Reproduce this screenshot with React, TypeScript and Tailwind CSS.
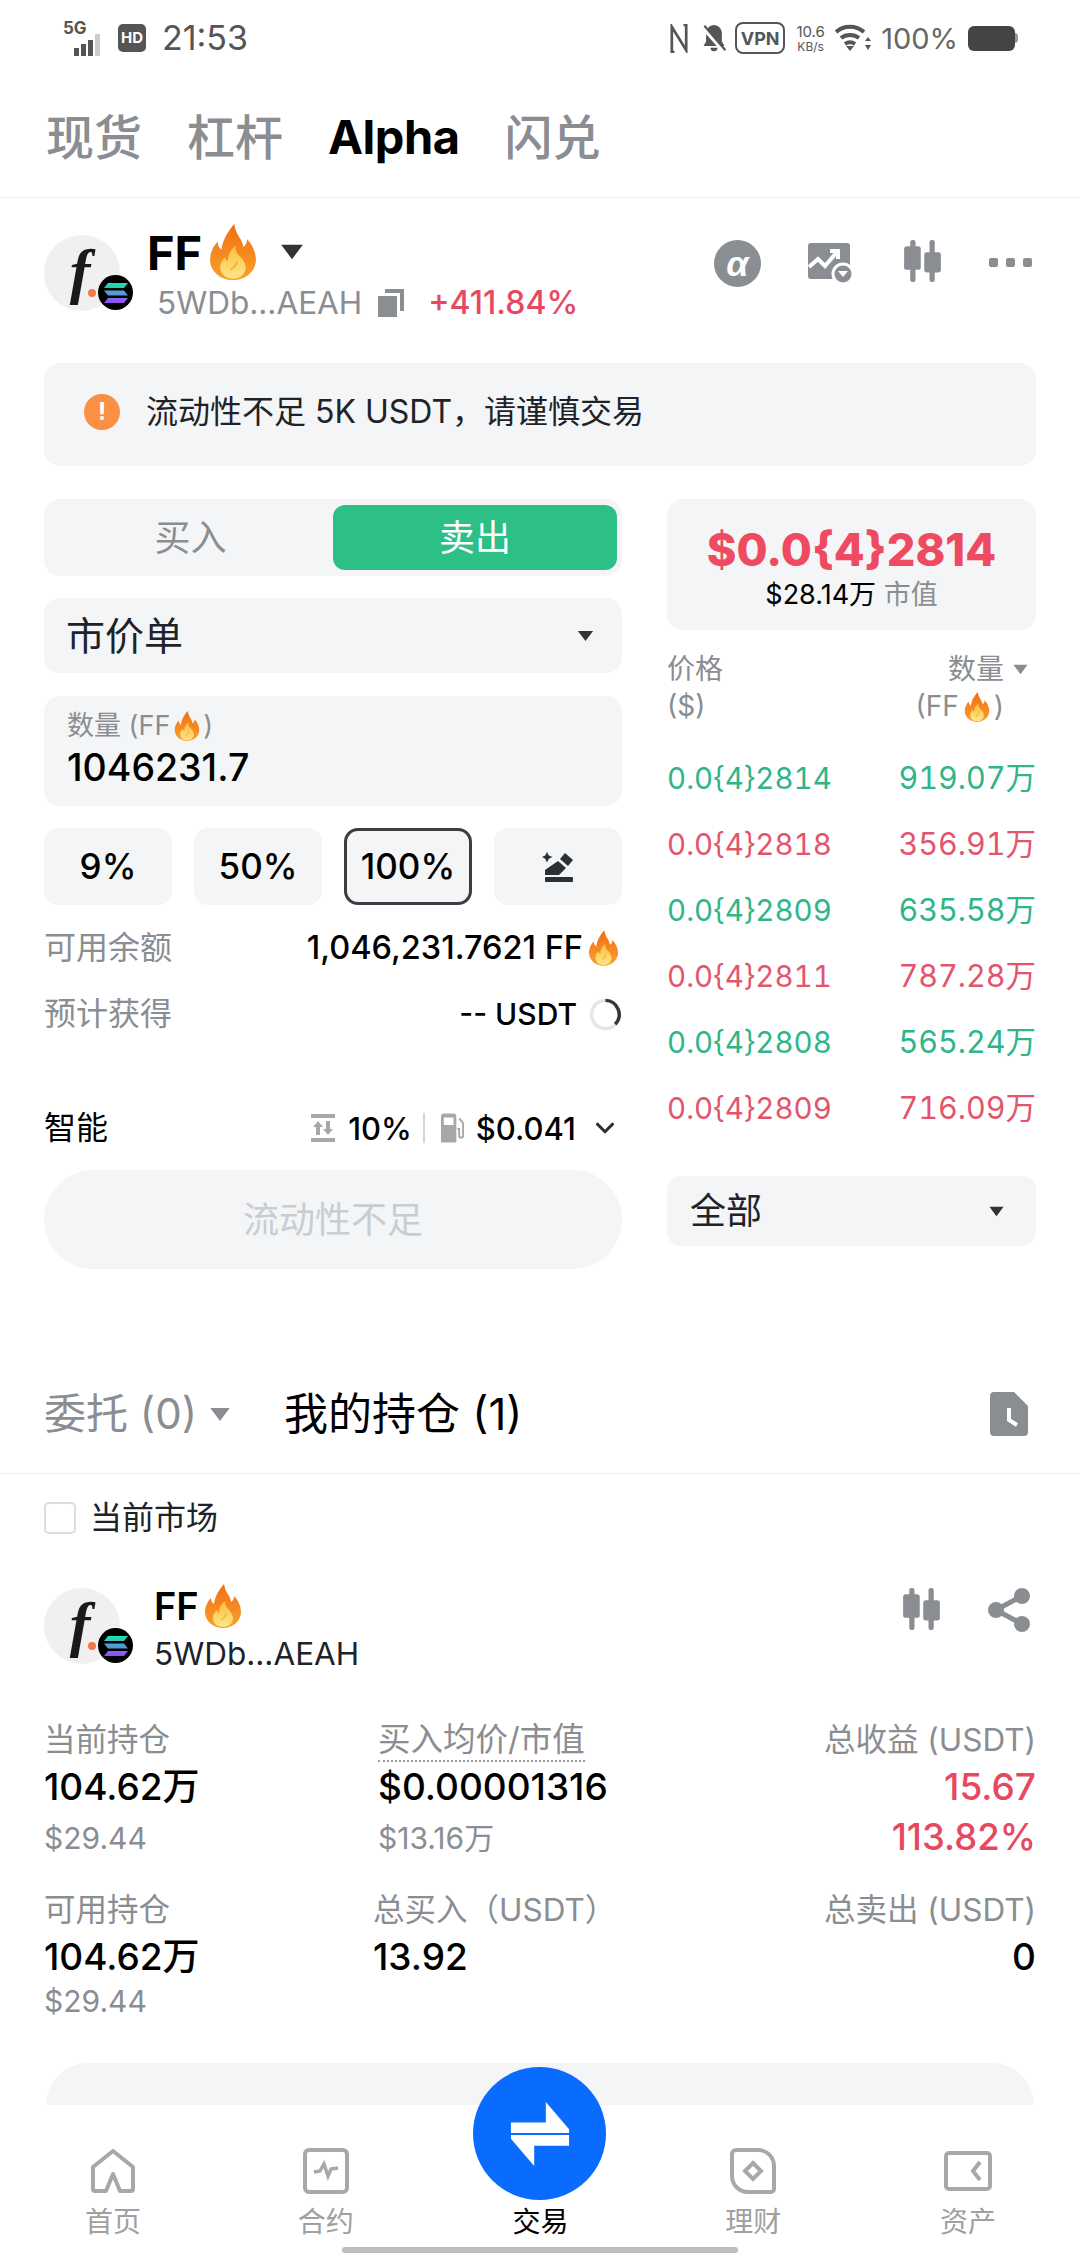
import { ChevronDown } from "lucide-react";

const font = { fontFamily: '"Inter", "Noto Sans CJK SC", sans-serif' };

function Flame({ className }: { className: string }) {
  return (
    <svg viewBox="0 0 36 44" className={className}>
      <defs>
        <linearGradient id="flameOuter" x1="0" y1="0" x2="0" y2="1">
          <stop offset="0" stopColor="#f26d12" />
          <stop offset="1" stopColor="#f9a12e" />
        </linearGradient>
        <linearGradient id="flameInner" x1="0" y1="0" x2="0" y2="1">
          <stop offset="0" stopColor="#fbbf3c" />
          <stop offset="1" stopColor="#fde68a" />
        </linearGradient>
      </defs>
      <path
        d="M19 0c1 6 3 9 5 12 1 2 2 4 2 6 2-1 3-3 3-6 4 4 7 10 7 16 0 9-8 16-18 16S0 37 0 28c0-6 3-11 6-14 0 3 1 5 3 6 1-8 5-14 10-20z"
        fill="url(#flameOuter)"
      />
      <path
        d="M20 17c0 4 1 6 3 8 3 3 5 6 5 9 0 5-4 9-10 9S8 39 8 34c0-4 2-6 4-8 0 2 1 3 2 3 0-5 2-9 6-12z"
        fill="url(#flameInner)"
      />
      <path d="M21 29c0 3-2 5-5 7" fill="none" stroke="#f2b63a" strokeWidth="1.500" />
    </svg>
  );
}

function Caret({ className }: { className: string }) {
  return (
    <svg viewBox="0 0 20 14" className={className} fill="currentColor">
      <path d="M1 1h18l-9 12z" />
    </svg>
  );
}

function Candles({ className }: { className: string }) {
  return (
    <svg viewBox="0 0 42 48" className={className} fill="#8a8d91">
      <rect x="7" y="0" width="6" height="48" rx="2.500" />
      <rect x="0" y="7" width="19" height="27" rx="3" />
      <rect x="29" y="0" width="6" height="48" rx="2.500" />
      <rect x="23" y="14" width="19" height="23" rx="3" />
    </svg>
  );
}

function TokenLogo() {
  return (
    <div className="relative w-[76px] h-[76px] shrink-0">
      <div className="w-[76px] h-[76px] rounded-full bg-[#f0f0f0] flex items-center justify-center">
        <span
          className="text-[62px] leading-none italic font-bold text-[#1a1a1a] -mt-1 -ml-1"
          style={{ fontFamily: '"Liberation Serif", serif' }}
        >
          f
        </span>
      </div>
      <div className="absolute left-[44px] top-[54px] w-[8px] h-[8px] rounded-full bg-[#f4794a]" />
      <div className="absolute left-[54px] top-[40px] w-[35px] h-[35px] rounded-full bg-black flex items-center justify-center">
        <svg viewBox="0 0 24 20" className="w-[24px] h-[20px]">
          <defs>
            <linearGradient id="sol" x1="0" y1="0" x2="0" y2="1">
              <stop offset="0" stopColor="#19e3a8" />
              <stop offset="0.5" stopColor="#4f9fd8" />
              <stop offset="1" stopColor="#9945ff" />
            </linearGradient>
          </defs>
          <path d="M4 0h20l-4 5H0zM0 7.500h20l4 5H4zM4 15h20l-4 5H0z" fill="url(#sol)" />
        </svg>
      </div>
    </div>
  );
}

function StatusBar() {
  return (
    <div className="h-[76px] relative flex items-center justify-between pl-[63px] pr-[62px] text-[#555]">
      <div className="flex items-center">
        <div className="relative w-[45px] h-[36px]">
          <span className="absolute left-0 -top-[1px] text-[17px] leading-[18px] font-bold">5G</span>
          <div className="absolute left-[11px] bottom-0 flex items-end gap-[2px]">
            <div className="w-[5px] h-[8px] bg-[#555]" />
            <div className="w-[5px] h-[12px] bg-[#555]" />
            <div className="w-[5px] h-[16px] bg-[#555]" />
            <div className="w-[5px] h-[22px] bg-[#ccc]" />
          </div>
        </div>
        <div className="ml-[10px] w-[28px] h-[28px] rounded-[5px] bg-[#555] text-white text-[15px] font-bold flex items-center justify-center">
          HD
        </div>
        <span className="ml-[16px] text-[34px] leading-none">21:53</span>
      </div>
      <div className="flex items-center">
        <svg viewBox="0 0 20 32" className="w-[18px] h-[29px]" fill="none" stroke="#555" strokeWidth="3">
          <path d="M5 31h-3V3l16 26V1h-3" />
        </svg>
        <svg viewBox="0 0 28 32" className="ml-[13px] w-[26px] h-[28px]" fill="#555">
          <path d="M14 1c-5 0-9 4-9 10v9l-3 5h24l-3-5v-9c0-6-4-10-9-10zM10 27h8a4 4 0 0 1-8 0z" />
          <path d="M1 4l24 27" stroke="#fff" strokeWidth="4" />
          <path d="M3 2l24 28" stroke="#555" strokeWidth="2.500" />
        </svg>
        <div className="ml-[8px] w-[50px] h-[32px] rounded-[8px] border-2 border-[#555] text-[18px] font-bold flex items-center justify-center">
          VPN
        </div>
        <div className="ml-[9px] w-[33px] text-center text-[15px] leading-[16px]">
          <div>10.6</div>
          <div className="text-[12px] leading-[13px]">KB/s</div>
        </div>
        <svg viewBox="0 0 36 28" className="ml-[8px] w-[36px] h-[28px]" fill="none" stroke="#555" strokeWidth="4">
          <path d="M1 8c8-7 20-7 28 0M6 14c5-4 13-4 18 0M10 20c3-2 7-2 10 0" />
          <path d="M15 27l4-5h-8z" fill="#555" stroke="none" />
          <path d="M33 13l3 4h-6zM33 26l3-5h-6z" fill="#555" stroke="none" />
        </svg>
        <span className="ml-[10px] text-[29px] leading-none text-[#666]">100%</span>
        <div className="ml-[10px] w-[47px] h-[25px] rounded-[6px] bg-[#444]" />
        <div className="w-[3px] h-[10px] bg-[#999] rounded-r" />
      </div>
    </div>
  );
}

function TopTabs() {
  return (
    <div className="h-[122px] flex items-center pl-[46px] border-b border-[#efefef] text-[48px] font-medium text-[#8a8d91] pt-[2px]">
      <span>现货</span>
      <span className="ml-[45px]">杠杆</span>
      <span className="ml-[45px] font-bold text-black text-[47px] tracking-[-0.5px]">Alpha</span>
      <span className="ml-[45px]">闪兑</span>
    </div>
  );
}

function TokenHeader() {
  return (
    <div className="h-[165px] flex px-[44px] pt-[37px] justify-between">
      <div className="flex">
        <TokenLogo />
        <div className="ml-[27px]">
          <div className="flex items-center h-[50px] -mt-[8px]">
            <span className="text-[47px] leading-none font-bold text-black">FF</span>
            <Flame className="ml-[7px] w-[48px] h-[56px]" />
            <Caret className="ml-[23px] w-[24px] h-[18px] text-[#333]" />
          </div>
          <div className="flex items-center mt-[6px] ml-[10px]">
            <span className="text-[31.500px] leading-[40px] text-[#8a8d91]">5WDb...AEAH</span>
            <svg viewBox="0 0 26 28" className="ml-[16px] w-[26px] h-[28px]" fill="#8a8d91">
              <path d="M0 7h19v21H0z" />
              <path d="M7 0h19v22h-4V4H7z" />
            </svg>
            <span className="ml-[24px] text-[32px] leading-[40px] font-medium text-[#e8485f]">+411.84%</span>
          </div>
        </div>
      </div>
      <div className="flex items-start pt-[5px] pr-[4px]">
        <div
          className="w-[47px] h-[47px] rounded-full bg-[#8a8d91] text-white text-[36px] italic font-bold flex items-center justify-center"
          style={{ fontFamily: '"Liberation Sans", sans-serif' }}
        >
          α
        </div>
        <svg viewBox="0 0 46 42" className="ml-[47px] mt-[3px] w-[46px] h-[42px]">
          <rect x="0" y="0" width="42" height="36" rx="3" fill="#8a8d91" />
          <path d="M1 24l9-8 7 7 12-14M22 8h8v8" fill="none" stroke="#fff" strokeWidth="4" />
          <circle cx="35" cy="31" r="10" fill="#8a8d91" stroke="#fff" strokeWidth="3" />
          <path d="M30 28h10l-5 6z" fill="#fff" />
        </svg>
        <Candles className="ml-[47px] w-[43px] h-[42px]" />
        <div className="ml-[45px] mt-[18px] flex gap-[8px]">
          <div className="w-[9px] h-[9px] rounded-[2px] bg-[#8a8d91]" />
          <div className="w-[9px] h-[9px] rounded-[2px] bg-[#8a8d91]" />
          <div className="w-[9px] h-[9px] rounded-[2px] bg-[#8a8d91]" />
        </div>
      </div>
    </div>
  );
}

function Alert() {
  return (
    <div className="mx-[44px] h-[103px] rounded-[16px] bg-[#f4f5f6] flex items-center pl-[40px] pb-[6px]">
      <div className="w-[36px] h-[36px] rounded-full bg-[#fb8f43] text-white text-[24px] font-bold flex items-center justify-center">
        !
      </div>
      <span className="ml-[26px] text-[32px] leading-none text-[#1e2329]">流动性不足 5K USDT，请谨慎交易</span>
    </div>
  );
}

function PctButton({ label, active }: { label: string; active?: boolean }) {
  return (
    <div
      className={
        active
          ? "h-[77px] rounded-[14px] bg-[#f4f5f6] border-[3px] border-[#3a3d41] flex items-center justify-center text-[35px] font-medium text-black"
          : "h-[77px] rounded-[14px] bg-[#f4f5f6] flex items-center justify-center text-[35px] font-medium text-black"
      }
    >
      {label}
    </div>
  );
}

function OrderForm() {
  return (
    <div className="w-[578px] shrink-0">
      <div className="h-[77px] rounded-[16px] bg-[#f4f5f6] pl-[6px] pr-[5px] py-[6px] flex">
        <div className="flex-1 flex items-center justify-center text-[36px] text-[#8a8d91] -ml-[2px]">买入</div>
        <div className="w-[284px] rounded-[12px] bg-[#2dc086] flex items-center justify-center text-[36px] text-white">
          卖出
        </div>
      </div>
      <div className="mt-[22px] h-[75px] rounded-[16px] bg-[#f4f5f6] flex items-center justify-between pl-[22px] pr-[28px]">
        <span className="text-[39px] leading-none text-[#1e2329]">市价单</span>
        <Caret className="w-[17px] h-[12px] text-[#333]" />
      </div>
      <div className="mt-[23px] h-[110px] rounded-[16px] bg-[#f4f5f6] pl-[23px] pt-[12px]">
        <div className="flex items-center h-[36px] text-[27px] text-[#8a8d91]">
          <span>数量 (FF</span>
          <Flame className="ml-[4px] w-[26px] h-[30px]" />
          <span className="ml-[3px]">)</span>
        </div>
        <div className="mt-[2px] text-[37.500px] leading-[44px] font-medium text-black">1046231.7</div>
      </div>
      <div className="mt-[22px] grid grid-cols-4 gap-[22px]">
        <PctButton label="9%" />
        <PctButton label="50%" />
        <PctButton label="100%" active />
        <div className="h-[77px] rounded-[14px] bg-[#f4f5f6] flex items-center justify-center">
          <svg viewBox="0 0 32 30" className="w-[32px] h-[30px]" fill="#2b2f36">
            <path d="M5 0l1.800 3.500L10.500 5 6.800 6.800 5 10.500 3.200 6.800 0 5l3.200-1.500z" />
            <path d="M23 1l8 7-5 6-8-7z" />
            <path d="M16 9l8 7-7 7H3v-5z" />
            <rect x="3" y="25" width="28" height="5" rx="1" />
          </svg>
        </div>
      </div>
      <div className="mt-[23px] flex items-center justify-between h-[40px]">
        <span className="text-[32px] leading-none text-[#8a8d91]">可用余额</span>
        <div className="flex items-center pr-[4px]">
          <span className="text-[32.500px] leading-none font-medium text-black">1,046,231.7621 FF</span>
          <Flame className="ml-[6px] w-[29px] h-[36px]" />
        </div>
      </div>
      <div className="mt-[26px] flex items-center justify-between h-[40px]">
        <span className="text-[32px] leading-none text-[#8a8d91]">预计获得</span>
        <div className="flex items-center">
          <span className="text-[30px] leading-none font-medium text-black">-- USDT</span>
          <svg viewBox="0 0 34 34" className="ml-[12px] w-[33px] h-[33px]" fill="none" strokeWidth="3.500">
            <circle cx="17" cy="17" r="14.500" stroke="#e6e6e6" />
            <path d="M17 2.500A14.500 14.500 0 0 1 27 27" stroke="#33363a" />
          </svg>
        </div>
      </div>
      <div className="mt-[74px] flex items-center justify-between h-[40px]">
        <span className="text-[32px] leading-none text-black">智能</span>
        <div className="flex items-center pr-[2px]">
          <svg viewBox="0 0 24 28" className="w-[24px] h-[28px]" fill="#a8a8a8">
            <rect x="0" y="0" width="24" height="4" />
            <rect x="0" y="24" width="24" height="4" />
            <path d="M7 7l5 6H9v8H5v-8H2zM17 21l-5-6h3V7h4v8h3z" />
          </svg>
          <span className="ml-[13px] text-[31px] leading-none font-medium text-black">10%</span>
          <div className="ml-[11px] w-[2px] h-[30px] bg-[#d6d6d6]" />
          <svg viewBox="0 0 26 30" className="ml-[15px] w-[25px] h-[30px]" fill="#a8a8a8">
            <path d="M1 3a3 3 0 0 1 3-3h10a3 3 0 0 1 3 3v27H1zM4 4v8h10V4z" />
            <path d="M20 5l4 5v13a2 2 0 0 1-4 0v-7h-2" fill="none" stroke="#a8a8a8" strokeWidth="2" />
          </svg>
          <span className="ml-[11px] text-[31px] leading-none font-medium text-black">$0.041</span>
          <ChevronDown className="ml-[14px] w-[30px] h-[30px] text-[#2b2f36]" strokeWidth={2.5} />
        </div>
      </div>
      <div className="mt-[22px] h-[99px] rounded-full bg-[#f3f5f6] flex items-center justify-center text-[36px] text-[#c9cdd1]">
        流动性不足
      </div>
    </div>
  );
}

const bookRows = [
  { price: "0.0{4}2814", qty: "919.07万", color: "text-[#2fb588]" },
  { price: "0.0{4}2818", qty: "356.91万", color: "text-[#e2556c]" },
  { price: "0.0{4}2809", qty: "635.58万", color: "text-[#2fb588]" },
  { price: "0.0{4}2811", qty: "787.28万", color: "text-[#e2556c]" },
  { price: "0.0{4}2808", qty: "565.24万", color: "text-[#2fb588]" },
  { price: "0.0{4}2809", qty: "716.09万", color: "text-[#e2556c]" },
];

function OrderBook() {
  return (
    <div className="flex-1">
      <div className="h-[131px] rounded-[16px] bg-[#f4f5f6] flex flex-col items-center pt-[26px]">
        <div className="text-[45px] leading-[50px] font-extrabold text-[#ee4b62]">$0.0{"{4}"}2814</div>
        <div className="mt-[4px] text-[27px] leading-[32px]">
          <span className="text-black">$28.14万 </span>
          <span className="text-[#8a8d91]">市值</span>
        </div>
      </div>
      <div className="mt-[20px] flex justify-between text-[28px] text-[#8a8d91]">
        <div className="leading-[37px]">
          <div className="mt-[1px]">价格</div>
          <div>($)</div>
        </div>
        <div className="leading-[37px] flex flex-col items-end pr-[7px]">
          <div className="flex items-center mt-[1px]">
            数量
            <Caret className="ml-[8px] w-[17px] h-[11px] text-[#8a8d91]" />
          </div>
          <div className="flex items-center pr-[25px]">
            (FF
            <Flame className="ml-[4px] w-[28px] h-[30px]" />
            <span className="ml-[3px]">)</span>
          </div>
        </div>
      </div>
      <div className="mt-[20px]">
        {bookRows.map((row, i) => (
          <div key={i} className={`h-[66px] flex items-center justify-between tabular-nums ${row.color}`}>
            <span className="text-[29.500px]">{row.price}</span>
            <span className="text-[30.500px]">{row.qty}</span>
          </div>
        ))}
      </div>
      <div className="mt-[35px] h-[70px] rounded-[14px] bg-[#f4f5f6] flex items-center justify-between pl-[23px] pr-[31px]">
        <span className="text-[36px] leading-none text-[#1e2329]">全部</span>
        <Caret className="w-[17px] h-[11px] text-[#333]" />
      </div>
    </div>
  );
}

function PositionTabs() {
  return (
    <div className="mt-[113px] h-[92px] flex items-start justify-between px-[44px] border-b border-[#efefef] pt-[10px]">
      <div className="flex items-center h-[44px]">
        <span className="text-[42px] leading-none text-[#8a8d91]">委托 (0)</span>
        <Caret className="ml-[12px] w-[22px] h-[15px] text-[#8a8d91]" />
        <span className="ml-[53px] text-[44px] leading-none text-black">我的持仓 (1)</span>
      </div>
      <svg viewBox="0 0 38 44" className="mr-[8px] w-[38px] h-[44px]">
        <path d="M4 0h20l14 14v26a4 4 0 0 1-4 4H4a4 4 0 0 1-4-4V4a4 4 0 0 1 4-4z" fill="#8a8d91" />
        <path d="M19 16v12l8 5" fill="none" stroke="#fff" strokeWidth="4" />
      </svg>
    </div>
  );
}

function Stat({
  label,
  value,
  sub,
  subClass,
  dotted,
  align,
}: {
  label: string;
  value: string;
  sub?: string;
  subClass?: string;
  dotted?: boolean;
  align?: "right";
}) {
  return (
    <div className={align === "right" ? "text-right" : ""}>
      <div className="h-[44px] leading-[44px] text-[31.500px] text-[#8a8d91]">
        <span className={dotted ? "border-b-2 border-dotted border-[#999] pb-[1px] text-[32.500px]" : ""}>{label}</span>
      </div>
      <div className={`mt-[1px] h-[48px] leading-[48px] text-[37px] font-medium ${align === "right" && label.startsWith("总收益") ? "text-[#e8485f]" : "text-black"}`}>
        {value}
      </div>
      {sub && <div className={subClass ?? "mt-[4px] h-[46px] leading-[46px] text-[30px] text-[#8a8d91]"}>{sub}</div>}
    </div>
  );
}

function Position() {
  return (
    <div className="px-[44px]">
      <div className="mt-[28px] flex items-center h-[32px]">
        <div className="w-[32px] h-[32px] rounded-[5px] border-2 border-[#dcdcdc]" />
        <span className="ml-[14px] text-[32px] leading-none text-[#1e2329]">当前市场</span>
      </div>
      <div className="mt-[54px] flex justify-between">
        <div className="flex">
          <TokenLogo />
          <div className="ml-[34px] -mt-[4px]">
            <div className="flex items-center h-[44px]">
              <span className="text-[38px] leading-none font-semibold text-black">FF</span>
              <Flame className="ml-[6px] w-[36px] h-[44px]" />
            </div>
            <div className="mt-[4px] text-[31.500px] leading-[44px] text-[#1e2329]">5WDb...AEAH</div>
          </div>
        </div>
        <div className="flex items-start mr-[6px]">
          <Candles className="w-[43px] h-[42px]" />
          <svg viewBox="0 0 42 44" className="ml-[45px] w-[42px] h-[44px]" fill="#8a8d91">
            <circle cx="34" cy="8" r="8" />
            <circle cx="8" cy="22" r="8" />
            <circle cx="34" cy="36" r="8" />
            <path d="M8 22L34 8M8 22l26 14" stroke="#8a8d91" strokeWidth="5" />
          </svg>
        </div>
      </div>
      <div className="mt-[42px] grid grid-cols-[334px_1fr_1fr]">
        <Stat label="当前持仓" value="104.62万" sub="$29.44" />
        <Stat label="买入均价/市值" value="$0.00001316" sub="$13.16万" dotted />
        <Stat
          label="总收益 (USDT)"
          value="15.67"
          sub="113.82%"
          subClass="mt-[3px] h-[46px] leading-[46px] text-[36.500px] font-medium text-[#e8485f]"
          align="right"
        />
      </div>
      <div className="mt-[27px] grid grid-cols-[329px_1fr_1fr]">
        <Stat
          label="可用持仓"
          value="104.62万"
          sub="$29.44"
          subClass="-mt-[3px] h-[46px] leading-[46px] text-[30px] text-[#8a8d91]"
        />
        <Stat label="总买入（USDT）" value="13.92" />
        <Stat label="总卖出 (USDT)" value="0" align="right" />
      </div>
    </div>
  );
}

function NavItem({ label, active, children }: { label: string; active?: boolean; children?: React.ReactNode }) {
  return (
    <div className="flex flex-col items-center w-[120px]">
      <div className="h-[48px] flex items-center justify-center">{children}</div>
      <span className={`mt-[9px] text-[28px] leading-[36px] ${active ? "text-black" : "text-[#a0a0a0]"}`}>{label}</span>
    </div>
  );
}

function BottomNav() {
  return (
    <div className="absolute left-0 right-0 bottom-0 h-[193px]">
      <div className="absolute left-[46px] right-[46px] top-0 h-[42px] rounded-t-[60px] bg-[#f3f5f6]" />
      <div className="absolute left-0 right-0 top-[42px] bottom-0 bg-white" />
      <div className="absolute left-[473px] top-[4px] w-[133px] h-[133px] rounded-full bg-[#0a6cff] flex items-center justify-center">
        <svg viewBox="0 0 64 66" className="w-[62px] h-[66px]" fill="#fff">
          <path d="M38 0l24 28v4H2V21h36zM26 66L2 38v-4h60v11H26z" />
        </svg>
      </div>
      <div className="absolute left-[53px] right-[52px] top-[84px] flex justify-between">
        <NavItem label="首页">
          <svg viewBox="0 0 46 44" className="w-[46px] h-[44px]" fill="none" stroke="#a8a8a8" strokeWidth="4" strokeLinejoin="round">
            <path d="M23 2L3 18v22a2 2 0 0 0 2 2h11l7-17 7 17h11a2 2 0 0 0 2-2V18z" />
          </svg>
        </NavItem>
        <div className="ml-[-2px]">
          <NavItem label="合约">
            <svg viewBox="0 0 46 46" className="w-[46px] h-[46px]" fill="none" stroke="#a8a8a8" strokeWidth="4">
              <rect x="2" y="2" width="42" height="42" rx="4" />
              <path d="M11 24l6-1 4-7 4 12 3-7 7-1" strokeWidth="3.500" />
            </svg>
          </NavItem>
        </div>
        <NavItem label="交易" active />
        <div className="ml-[-2px]">
          <NavItem label="理财">
            <svg viewBox="0 0 46 46" className="w-[46px] h-[46px]" fill="none" stroke="#a8a8a8" strokeWidth="4">
              <path d="M6 2h22a16 16 0 0 1 16 16v23a3 3 0 0 1-3 3H18A16 16 0 0 1 2 28V6a4 4 0 0 1 4-4z" />
              <path d="M23 15l8 8-8 8-8-8z" />
            </svg>
          </NavItem>
        </div>
        <NavItem label="资产">
          <svg viewBox="0 0 48 40" className="w-[48px] h-[40px]" fill="none" stroke="#a8a8a8" strokeWidth="4">
            <rect x="2" y="2" width="44" height="36" rx="3" />
            <path d="M36 11l-7 9 7 9" />
          </svg>
        </NavItem>
      </div>
      <div className="absolute left-[342px] top-[184px] w-[396px] h-[6px] rounded-full bg-[#bdbdbd]" />
    </div>
  );
}

export default function App() {
  return (
    <div className="relative w-[1080px] h-[2256px] overflow-hidden bg-white" style={font}>
      <StatusBar />
      <TopTabs />
      <TokenHeader />
      <Alert />
      <div className="mt-[33px] px-[44px] flex gap-[45px]">
        <OrderForm />
        <OrderBook />
      </div>
      <PositionTabs />
      <Position />
      <BottomNav />
    </div>
  );
}
